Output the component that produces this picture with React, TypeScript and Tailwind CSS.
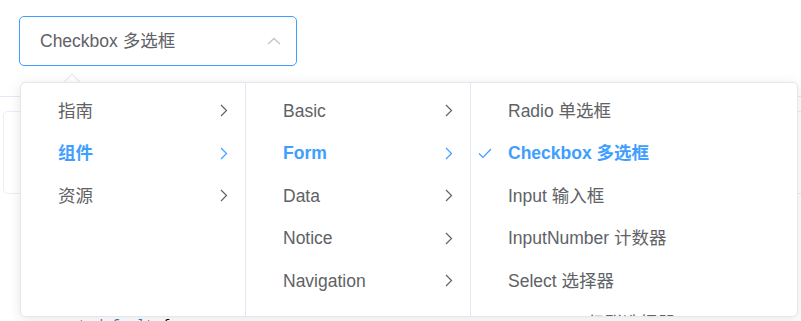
import React from "react";

type Node = { label: string; children?: boolean };

const col1: Node[] = [
  { label: "指南", children: true },
  { label: "组件", children: true },
  { label: "资源", children: true },
];

const col2: Node[] = [
  { label: "Basic", children: true },
  { label: "Form", children: true },
  { label: "Data", children: true },
  { label: "Notice", children: true },
  { label: "Navigation", children: true },
];

const col3: Node[] = [
  { label: "Radio 单选框" },
  { label: "Checkbox 多选框" },
  { label: "Input 输入框" },
  { label: "InputNumber 计数器" },
  { label: "Select 选择器" },
  { label: "Cascader 级联选择器" },
];

const Chevron = ({ active }: { active?: boolean }) => (
  <svg width="8" height="13" viewBox="0 0 8 13" className={active ? "text-[#409eff]" : "text-[#606266]"}>
    <path d="M1 1 L6.5 6.5 L1 12" fill="none" stroke="currentColor" strokeWidth="1.2" />
  </svg>
);

const Check = () => (
  <svg width="14" height="11" viewBox="0 0 14 11" className="text-[#409eff]">
    <path d="M1 5.5 L5 9.5 L13 1" fill="none" stroke="currentColor" strokeWidth="1.2" />
  </svg>
);

const Column = ({
  items,
  active,
  checked,
  className,
}: {
  items: Node[];
  active: number;
  checked?: boolean;
  className: string;
}) => (
  <ul className={`h-full shrink-0 overflow-hidden pt-[6.5px] ${className}`}>
    {items.map((it, i) => {
      const on = i === active;
      return (
        <li key={it.label} className="relative flex h-[42.5px] items-center pl-[37px] pr-[17px]">
          {checked && on ? (
            <span className="absolute left-[7px] top-[16px]">
              <Check />
            </span>
          ) : null}
          <span
            className={`flex-1 whitespace-nowrap text-[17.5px] ${on ? "font-bold text-[#409eff]" : "text-[#606266]"}`}
          >
            {it.label}
          </span>
          {it.children ? <Chevron active={on} /> : null}
        </li>
      );
    })}
  </ul>
);

export default function App() {
  return (
    <div
      className="relative h-[321px] w-[801px] overflow-hidden bg-white"
      style={{ fontFamily: '"Liberation Sans", "Noto Sans CJK SC", sans-serif' }}
    >
      <div className="pl-[19px] pt-[16px]">
        <div className="flex h-[50px] w-[278px] items-center justify-between rounded-[5px] border border-[#409eff] pl-[20px] pr-[15px]">
          <span className="text-[17.5px] text-[#606266]">Checkbox 多选框</span>
          <svg width="14" height="8" viewBox="0 0 14 8" className="text-[#c0c4cc]">
            <path d="M1 7 L7 1.5 L13 7" fill="none" stroke="currentColor" strokeWidth="1.3" />
          </svg>
        </div>
      </div>

      {/* page content behind the popper */}
      <div className="mt-[30px] h-px w-full bg-[#e6eaf5]" />
      <div className="ml-[3px] mt-[14px] h-[83px] rounded-l-[5px] border border-r-0 border-[#ebeef5]" />
      <div className="mt-[125px] pl-[36px] font-mono text-[14px] leading-none">
        <span className="text-[#3182bd]">export default</span> <span className="text-black">{"{"}</span>
      </div>

      {/* popper */}
      <div className="absolute left-[66px] top-[76px] h-[12px] w-[12px] rotate-45 border-l border-t border-[#e4e7ed] bg-white" />
      <div className="absolute left-[20px] top-[82px] flex h-[235px] w-[778px] overflow-hidden rounded-[5px] border border-[#e4e7ed] bg-white shadow-[0_2px_12px_0_rgba(0,0,0,0.1)]">
        <Column items={col1} active={1} className="w-[225px] border-r border-[#e4e7ed]" />
        <Column items={col2} active={1} className="w-[225px] border-r border-[#e4e7ed]" />
        <Column items={col3} active={1} checked className="flex-1" />
      </div>
    </div>
  );
}
